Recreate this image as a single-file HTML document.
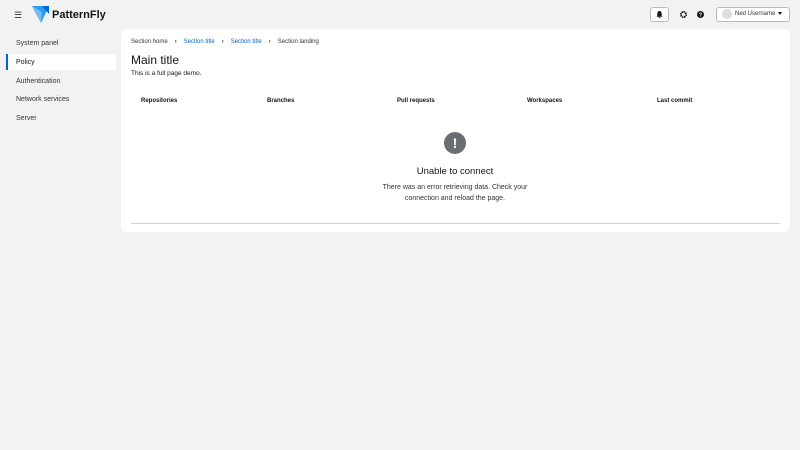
<!DOCTYPE html>
<html><head><style>
*{margin:0;padding:0;box-sizing:border-box}
body{width:800px;height:450px;background:#f2f2f2;font-family:"Liberation Sans",sans-serif;color:#151515;position:relative;overflow:hidden}
.abs{position:absolute}
.nav{font-size:7px;color:#333}
.t{font-size:6px;font-weight:bold}
.ch{display:inline-block;margin:0 7px;font-weight:bold;color:#333}
</style></head><body>
<div class="abs" style="left:14px;top:10px;font-size:9px;color:#333">☰</div>
<svg class="abs" style="left:32px;top:6px" width="17" height="17" viewBox="0 0 17 17">
<path d="M0 0H17L9 17Z" fill="#2b9af3"/><path d="M0 0L10 6L9 17Z" fill="#73bcf7"/><path d="M10 0H17V8Z" fill="#06c"/></svg>
<div class="abs" style="left:52px;top:9px;font-size:11px;font-weight:bold">PatternFly</div>

<div class="abs" style="left:650px;top:7px;width:19px;height:15px;border:1px solid #bbb;border-radius:3px;background:#fff"></div>
<svg class="abs" style="left:656px;top:11px" width="7" height="7" viewBox="0 0 8 8"><path d="M4 0C2 0 1.5 2 1.5 3.5V5.5L0.5 6.5H7.5L6.5 5.5V3.5C6.5 2 6 0 4 0ZM3 7H5V8H3Z" fill="#151515"/></svg>
<svg class="abs" style="left:680px;top:11px" width="7" height="7" viewBox="0 0 8 8"><circle cx="4" cy="4" r="3" fill="none" stroke="#151515" stroke-width="2.2" stroke-dasharray="1.5 0.8"/><circle cx="4" cy="4" r="1" fill="#f2f2f2"/></svg>
<svg class="abs" style="left:697px;top:11px" width="7" height="7" viewBox="0 0 8 8"><circle cx="4" cy="4" r="4" fill="#151515"/><text x="4" y="6.3" font-size="6" text-anchor="middle" fill="#fff" font-weight="bold">?</text></svg>
<div class="abs" style="left:716px;top:7px;width:74px;height:15px;border:1px solid #bbb;border-radius:3px;background:#fff"></div>
<div class="abs" style="left:722px;top:9px;width:10px;height:10px;border-radius:50%;background:#ddd"></div>
<div class="abs" style="left:735px;top:11px;font-size:6px;color:#333;white-space:nowrap">Ned Username</div>
<div class="abs" style="left:778px;top:12px;width:0;height:0;border-left:2.5px solid transparent;border-right:2.5px solid transparent;border-top:3px solid #151515"></div>

<div class="abs nav" style="left:16px;top:40px">System panel</div>
<div class="abs" style="left:6px;top:54px;width:110px;height:16px;background:#fff;border-radius:3px"></div>
<div class="abs" style="left:6px;top:54px;width:2px;height:16px;background:#06c"></div>
<div class="abs nav" style="left:16px;top:59px;color:#151515">Policy</div>
<div class="abs nav" style="left:16px;top:78px">Authentication</div>
<div class="abs nav" style="left:16px;top:96px">Network services</div>
<div class="abs nav" style="left:16px;top:115px">Server</div>

<div class="abs" style="left:121px;top:29px;width:669px;height:203px;background:#fff;border-radius:6px"></div>
<div class="abs" style="left:131px;top:39px;font-size:6px;color:#333;white-space:nowrap">Section home<span class="ch">›</span><span style="color:#06c">Section title</span><span class="ch">›</span><span style="color:#06c">Section title</span><span class="ch">›</span>Section landing</div>
<div class="abs" style="left:131px;top:53px;font-size:12px">Main title</div>
<div class="abs" style="left:131px;top:70px;font-size:6.5px">This is a full page demo.</div>
<div class="abs t" style="left:141px;top:98px">Repositories</div>
<div class="abs t" style="left:267px;top:98px">Branches</div>
<div class="abs t" style="left:397px;top:98px">Pull requests</div>
<div class="abs t" style="left:527px;top:98px">Workspaces</div>
<div class="abs t" style="left:657px;top:98px">Last commit</div>
<div class="abs" style="left:444px;top:132px;width:22px;height:22px;border-radius:50%;background:#6a6e73;color:#fff;font-weight:bold;font-size:14px;text-align:center;line-height:22px">!</div>
<div class="abs" style="left:355px;top:166px;width:200px;text-align:center;font-size:9.5px">Unable to connect</div>
<div class="abs" style="left:370px;top:183px;width:170px;text-align:center;font-size:7px;line-height:10.5px;color:#333">There was an error retrieving data. Check your connection and reload the page.</div>
<div class="abs" style="left:131px;top:223px;width:649px;height:1px;background:#d2d2d2"></div>
</body></html>
